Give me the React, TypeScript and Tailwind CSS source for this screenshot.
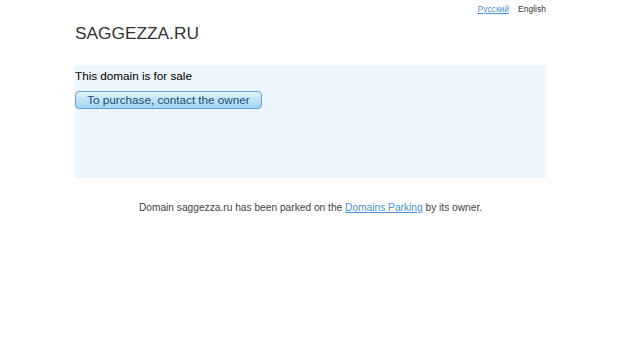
import React from 'react';

export default function App() {
  return (
    <div className="min-h-screen bg-white text-[#333] font-['Liberation_Sans',Arial,sans-serif]">
      {/* language switch */}
      <div className="flex justify-end gap-[9px] pr-[74px] pt-[4px] text-[8.5px] leading-[10px]">
        <a href="#" className="text-[#4a90d9] underline">Русский</a>
        <span className="text-[#333]">English</span>
      </div>

      <div className="ml-[75px] w-[471px]">
        <h1 className="mt-[9px] text-[17.3px] leading-[20px] text-[#333]">SAGGEZZA.RU</h1>

        {/* sale box */}
        <div className="mt-[22px] h-[113px] bg-[#edf5fd] pt-[4px]">
          <p className="text-[11.7px] leading-[14px] text-black">This domain is for sale</p>
          <button className="mt-[8px] h-[18px] w-[187px] rounded-[4px] border border-[#5aa6d8] bg-gradient-to-b from-[#e6f4fd] via-[#bfe1f7] to-[#a7d4f2] text-[11.7px] leading-[16px] text-[#1b4f78]">
            To purchase, contact the owner
          </button>
        </div>

        <p className="mt-[23px] text-center text-[10.2px] leading-[13px] text-[#444]">
          Domain saggezza.ru has been parked on the{' '}
          <a href="#" className="text-[#4a90d9] underline">Domains Parking</a> by its owner.
        </p>
      </div>
    </div>
  );
}
